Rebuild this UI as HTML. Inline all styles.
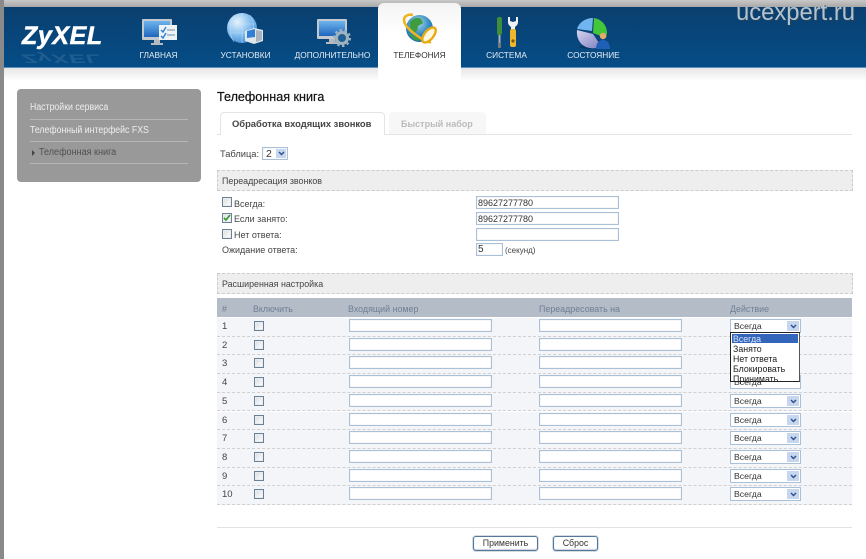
<!DOCTYPE html>
<html><head><meta charset="utf-8"><style>
html,body{margin:0;padding:0;background:#fff}
#p{position:relative;width:866px;height:559px;overflow:hidden;background:#fff;font-family:"Liberation Sans",sans-serif;font-size:9px;color:#444;filter:blur(.35px)}
#p div,#p span.a,#p svg{position:absolute}
.t{white-space:nowrap;line-height:12px}
.nav{color:#e6edf3;font-size:8.3px;width:87px;text-align:center;top:49px;line-height:12px}
.cb{width:8px;height:8px;border:1px solid #6b8093;background:linear-gradient(135deg,#d8dde2,#fff);box-shadow:inset 0 0 0 1px #e8edf2}
.in{height:11px;border:1px solid #a9c0d6;background:#fff;box-shadow:inset 0 0 1px #ccd;color:#333;line-height:12px;padding-left:1px;box-sizing:content-box;font-size:9px}
.sec{left:217px;width:634px;height:19px;background:#eee;border:1px dashed #ccc;line-height:20px;text-indent:4px;color:#444;font-size:8.9px}
.r{left:217px;width:635px;height:18.7px;background:#f3f5f9;border-bottom:1px dashed #d0d0d0;box-sizing:border-box}
.sel{left:513px;top:1px;width:69px;height:12px;border:1px solid #a9c0d6;background:#fff;line-height:13px;text-indent:3px;color:#333;font-size:8.7px}
.ar{left:56px;top:1px;width:12px;height:10px;background:#c5d6ee}
.ar svg{left:3px;top:3px}
.num{left:5px;top:3px;color:#444;line-height:11px;font-size:9.5px}
.rc{left:37px;top:3px}
.i1{left:132px;top:1px;width:140px}
.i2{left:322px;top:1px;width:140px}
.th{top:303px;color:#6e7f94;font-size:8.9px}
.b{background:#fff;border:1px solid #54789c;border-radius:3px;box-shadow:inset 0 -1px 1px #ccd,0 0 0 1px #d5dce4;text-align:center;line-height:13px;color:#333;font-size:8.8px;height:13px;top:536px}
.li{left:2px;width:66px;line-height:10px;color:#222;font-size:8.8px;white-space:nowrap}
</style></head><body><div id="p">
<div style="left:0;top:0;width:866px;height:7px;background:linear-gradient(#c8c8c8,#a8a8a8)"></div>
<div style="left:0;top:0;width:3.5px;height:559px;background:#8a8a8a"></div>
<div style="left:4px;top:7px;width:862px;height:61px;background:linear-gradient(#0a3f6f,#054d87);border-bottom:1px solid #5d8fb8;box-sizing:border-box"></div>
<div style="left:4px;top:68px;width:862px;height:13px;background:linear-gradient(#e6e6e6,#fff)"></div>
<div style="left:378px;top:3px;width:83px;height:78px;background:linear-gradient(#f4f4f4 0,#fff 40%);border-radius:6px 6px 0 0"></div>

<div class="t" style="left:22px;top:22px;font:italic bold 25px/28px 'Liberation Sans',sans-serif;color:#fff;letter-spacing:.6px;-webkit-text-stroke:.5px #fff">ZyXEL</div>
<div class="t" style="left:22px;top:45px;font:italic bold 24px/28px 'Liberation Sans',sans-serif;color:#fff;letter-spacing:.9px;opacity:.1;transform:scaleY(-.5);transform-origin:50% 0;margin-top:20px">ZyXEL</div>

<div class="nav" style="left:115px">ГЛАВНАЯ</div>
<div class="nav" style="left:202px">УСТАНОВКИ</div>
<div class="nav" style="left:289px">ДОПОЛНИТЕЛЬНО</div>
<div class="nav" style="left:376px;color:#333">ТЕЛЕФОНИЯ</div>
<div class="nav" style="left:463px">СИСТЕМА</div>
<div class="nav" style="left:550px">СОСТОЯНИЕ</div>

<svg style="left:0;top:0" width="866" height="70" viewBox="0 0 866 70">
<defs>
<linearGradient id="sc" x1="0" y1="0" x2="0" y2="1"><stop offset="0" stop-color="#6db4ee"/><stop offset="1" stop-color="#1f66bd"/></linearGradient>
<radialGradient id="gl" cx=".35" cy=".3" r=".8"><stop offset="0" stop-color="#e6f3fd"/><stop offset=".6" stop-color="#7ab8ec"/><stop offset="1" stop-color="#3d86cf"/></radialGradient>
<radialGradient id="gt" cx=".45" cy=".3" r=".8"><stop offset="0" stop-color="#a6d8e8"/><stop offset=".55" stop-color="#2f86c0"/><stop offset="1" stop-color="#1b5fa0"/></radialGradient>
<linearGradient id="pl" x1="0" y1="0" x2="1" y2="1"><stop offset="0" stop-color="#d5d4f0"/><stop offset="1" stop-color="#8080c0"/></linearGradient>
</defs>
<!-- home -->
<rect x="142" y="19" width="30" height="21" rx="1" fill="#c3c9cf"/><rect x="144" y="21" width="26" height="16" fill="url(#sc)"/><path d="M154 40h6v3h3v2h-12v-2h3z" fill="#b4bac0"/>
<rect x="159" y="25" width="18" height="15" fill="#eef3f8"/><path d="M161 30l2 2 3-5M161 36l2 2 3-5" fill="none" stroke="#2b7fcf" stroke-width="1.4"/><path d="M167 30h8M167 35h8" stroke="#8aa0b5" stroke-width="1.2"/>
<!-- globe -->
<circle cx="242" cy="28" r="15" fill="url(#gl)"/><path d="M228 24h28M229 33h26M242 13v30M234 15c-5 8-5 20 0 27M250 15c5 8 5 20 0 27" fill="none" stroke="#cfe6fa" stroke-width=".6" opacity=".7"/>
<path d="M245 31l9-3 9 2v11l-9 3-9-3z" fill="#dfe6ec"/><path d="M247 31l8-2v8l-8 1z" fill="#2f7fd6"/><path d="M256 30l6 1v9l-6 2z" fill="#aab4bf"/>
<!-- dop -->
<rect x="317" y="19" width="30" height="20" rx="1" fill="#c3c9cf"/><rect x="319" y="21" width="26" height="15" fill="url(#sc)"/><path d="M329 39h6v3h3v2h-12v-2h3z" fill="#b4bac0"/>
<circle cx="342" cy="38" r="5.5" fill="#1f5f92" stroke="#9fb2bf" stroke-width="3"/><circle cx="342" cy="38" r="8" fill="none" stroke="#9fb2bf" stroke-width="2" stroke-dasharray="2.5 2.5"/>
<!-- telephony -->
<circle cx="419.5" cy="28.5" r="13.5" fill="url(#gt)"/>
<path d="M410 22c3-4 8-5 11-3l2 4-5 3-1 5-4 3c-2-2-3-5-3-12zM409 33l12 7c-5 2-10-1-12-7z" fill="#3f9c3e"/>
<path d="M413 15c-5-1-9 1-9 5 0 6 9 13 15 17 4 3 9 6 12 5" fill="none" stroke="#efb51f" stroke-width="2.6"/>
<ellipse cx="429" cy="35" rx="4.5" ry="9" transform="rotate(40 429 35)" fill="#fff7dd" stroke="#e8aa14" stroke-width="2.4"/>
<!-- tools -->
<rect x="497" y="17" width="5" height="18" rx="2" fill="#3f8f3a"/><rect x="498.5" y="35" width="2" height="8" fill="#a8b0b4"/><rect x="498" y="43" width="3" height="5" fill="#6f7a80"/>
<path d="M508 17v5c0 3 2 4 3 5v3h4v-3c1-1 3-2 3-5v-5l-2 0v4l-3 1-3-1v-4z" fill="#f0f2f3"/>
<rect x="510" y="29" width="6" height="18" rx="2" fill="#efb82c"/><circle cx="513" cy="41" r="1.6" fill="#7a5a10"/>
<!-- pie -->
<ellipse cx="593" cy="47" rx="14" ry="2" fill="#032d52" opacity=".6"/>
<path d="M594 18c7 1 13 7 13 15l-1 5-13-5z" fill="#43c63a"/>
<path d="M593 18c-7 0-14 4-16 11l15 2z" fill="#72b4ee"/>
<path d="M577 30l16 4 8 12c-3 2-8 3-11 2-8-1-14-8-13-18z" fill="url(#pl)"/>
<circle cx="603" cy="36" r="3.2" fill="#e9a96a"/><path d="M596 49c0-6 3-9 7-9s7 3 7 9z" fill="#1f5fb5"/>
</svg>

<div class="t" style="left:736px;top:0;font-size:23.8px;line-height:26px;color:#b4c3cf;text-shadow:1px 1px 1px #26475f">ucexpert.ru</div>

<!-- sidebar -->
<div style="left:17px;top:89px;width:184px;height:93px;background:#999;border-radius:4px"></div>
<div class="t" style="left:30px;top:102px;color:#eee;font-size:10px;transform:scaleX(.875);transform-origin:0 0">Настройки сервиса</div>
<div style="left:30px;top:119px;width:158px;height:1px;background:#b5b5b5"></div>
<div class="t" style="left:30px;top:125px;color:#eee;font-size:10px;transform:scaleX(.875);transform-origin:0 0">Телефонный интерфейс FXS</div>
<div style="left:30px;top:141px;width:158px;height:1px;background:#b5b5b5"></div>
<div style="left:32px;top:150px;width:0;height:0;border-left:3px solid #444;border-top:3px solid transparent;border-bottom:3px solid transparent"></div>
<div class="t" style="left:39px;top:147px;color:#505050;font-size:10px;transform:scaleX(.906);transform-origin:0 0">Телефонная книга</div>
<div style="left:30px;top:163px;width:158px;height:1px;background:#b5b5b5"></div>

<!-- title & tabs -->
<div class="t" style="left:217px;top:90px;font-size:12.6px;line-height:14px;color:#111;-webkit-text-stroke:.2px #111">Телефонная книга</div>
<div style="left:217px;top:134px;width:635px;height:1px;background:#e4e4e4"></div>
<div style="left:220px;top:112px;width:165px;height:23px;background:#fff;border:1px solid #e4e4e4;border-bottom:0;border-radius:4px 4px 0 0;box-sizing:border-box"></div>
<div class="t" style="left:232px;top:117.5px;font-weight:bold;color:#444;font-size:9.4px">Обработка входящих звонков</div>
<div style="left:389px;top:112px;width:97px;height:22px;background:#f7f7f7;border-radius:4px 4px 0 0"></div>
<div class="t" style="left:401px;top:117.5px;font-weight:bold;color:#bbb;font-size:9px">Быстрый набор</div>
<div class="t" style="left:220px;top:148px;color:#444;font-size:9.3px">Таблица:</div>
<div class="in" style="left:262px;top:147px;width:23px;color:#333;font-size:10.5px"><span style="margin-left:2px">2</span><div style="left:13px;top:1px;width:10px;height:9px;background:#c5d6ee"><svg style="left:2px;top:2px" width="7" height="5"><path d="M1 1l2.5 2.5L6 1" fill="none" stroke="#2b4f8f" stroke-width="1.4"/></svg></div></div>

<div class="sec" style="top:170px">Переадресация звонков</div>
<div class="cb" style="left:222px;top:197px"></div><div class="t" style="left:234px;top:198px">Всегда:</div>
<div class="cb" style="left:222px;top:213px"></div><svg style="left:222px;top:213px" width="10" height="10"><path d="M2 5l2 2 4-5" fill="none" stroke="#2f9a2f" stroke-width="1.6"/></svg><div class="t" style="left:234px;top:213px">Если занято:</div>
<div class="cb" style="left:222px;top:229px"></div><div class="t" style="left:234px;top:229px">Нет ответа:</div>
<div class="t" style="left:222px;top:244px">Ожидание ответа:</div>
<div class="in" style="left:476px;top:196px;width:140px">89627277780</div>
<div class="in" style="left:476px;top:212px;width:140px">89627277780</div>
<div class="in" style="left:476px;top:228px;width:140px"></div>
<div class="in" style="left:476px;top:243px;width:24px;font-size:10px">5</div>
<div class="t" style="left:505px;top:245px;font-size:8px">(секунд)</div>

<div class="sec" style="top:273px">Расширенная настройка</div>
<div style="left:217px;top:298px;width:635px;height:19px;background:#b4bcc8"></div>
<div class="t th" style="left:222px">#</div>
<div class="t th" style="left:253px">Включить</div>
<div class="t th" style="left:348px">Входящий номер</div>
<div class="t th" style="left:539px">Переадресовать на</div>
<div class="t th" style="left:730px">Действие</div>

<div class="r" style="top:318px"><div class="num">1</div><div class="cb rc"></div><div class="in i1"></div><div class="in i2"></div><div class="sel">Всегда<div class="ar"><svg width="7" height="5"><path d="M1 1l2.5 2.5L6 1" fill="none" stroke="#2b4f8f" stroke-width="1.4"/></svg></div></div></div>
<div class="r" style="top:336.7px"><div class="num">2</div><div class="cb rc"></div><div class="in i1"></div><div class="in i2"></div></div>
<div class="r" style="top:355.4px"><div class="num">3</div><div class="cb rc"></div><div class="in i1"></div><div class="in i2"></div></div>
<div class="r" style="top:374.1px"><div class="num">4</div><div class="cb rc"></div><div class="in i1"></div><div class="in i2"></div><div class="sel">Всегда</div></div>
<div class="r" style="top:392.8px"><div class="num">5</div><div class="cb rc"></div><div class="in i1"></div><div class="in i2"></div><div class="sel">Всегда<div class="ar"><svg width="7" height="5"><path d="M1 1l2.5 2.5L6 1" fill="none" stroke="#2b4f8f" stroke-width="1.4"/></svg></div></div></div>
<div class="r" style="top:411.5px"><div class="num">6</div><div class="cb rc"></div><div class="in i1"></div><div class="in i2"></div><div class="sel">Всегда<div class="ar"><svg width="7" height="5"><path d="M1 1l2.5 2.5L6 1" fill="none" stroke="#2b4f8f" stroke-width="1.4"/></svg></div></div></div>
<div class="r" style="top:430.2px"><div class="num">7</div><div class="cb rc"></div><div class="in i1"></div><div class="in i2"></div><div class="sel">Всегда<div class="ar"><svg width="7" height="5"><path d="M1 1l2.5 2.5L6 1" fill="none" stroke="#2b4f8f" stroke-width="1.4"/></svg></div></div></div>
<div class="r" style="top:448.9px"><div class="num">8</div><div class="cb rc"></div><div class="in i1"></div><div class="in i2"></div><div class="sel">Всегда<div class="ar"><svg width="7" height="5"><path d="M1 1l2.5 2.5L6 1" fill="none" stroke="#2b4f8f" stroke-width="1.4"/></svg></div></div></div>
<div class="r" style="top:467.6px"><div class="num">9</div><div class="cb rc"></div><div class="in i1"></div><div class="in i2"></div><div class="sel">Всегда<div class="ar"><svg width="7" height="5"><path d="M1 1l2.5 2.5L6 1" fill="none" stroke="#2b4f8f" stroke-width="1.4"/></svg></div></div></div>
<div class="r" style="top:486.3px"><div class="num">10</div><div class="cb rc"></div><div class="in i1"></div><div class="in i2"></div><div class="sel">Всегда<div class="ar"><svg width="7" height="5"><path d="M1 1l2.5 2.5L6 1" fill="none" stroke="#2b4f8f" stroke-width="1.4"/></svg></div></div></div>

<!-- dropdown -->
<div style="left:730px;top:332px;width:70px;height:50px;background:#fff;border:1px solid #222;border-right-color:#555;box-sizing:border-box;z-index:3">
<div style="left:1px;top:1px;width:66px;height:9px;background:#3366bb"></div>
<div class="li" style="top:1px;color:#d8e4f8">Всегда</div>
<div class="li" style="top:11px">Занято</div>
<div class="li" style="top:21px">Нет ответа</div>
<div class="li" style="top:31px">Блокировать</div>
<div class="li" style="top:41px">Принимать</div>
</div>

<div style="left:217px;top:527px;width:635px;height:1px;background:#e2e2e2"></div>
<div class="b" style="left:473px;width:63px">Применить</div>
<div class="b" style="left:553px;width:43px">Сброс</div>
</div></body></html>
